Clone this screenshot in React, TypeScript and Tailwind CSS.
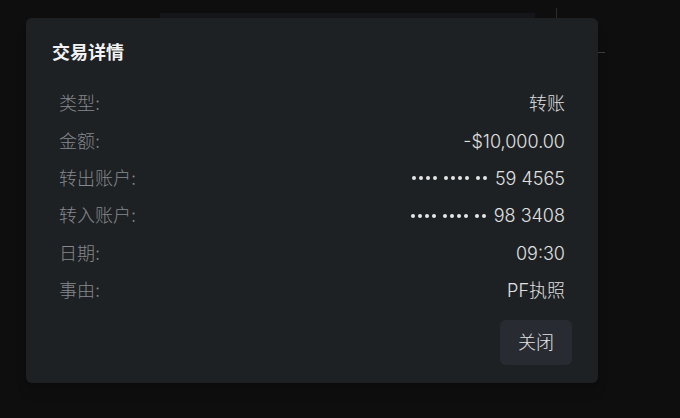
import React from 'react';

const rows: { label: string; value: string; masked?: boolean }[] = [
  { label: '类型:', value: '转账' },
  { label: '金额:', value: '-$10,000.00' },
  { label: '转出账户:', value: '59 4565', masked: true },
  { label: '转入账户:', value: '98 3408', masked: true },
  { label: '日期:', value: '09:30' },
  { label: '事由:', value: 'PF执照' },
];

function Dots({ n }: { n: number }) {
  return (
    <span className="flex items-center gap-[3px]">
      {Array.from({ length: n }).map((_, i) => (
        <span key={i} className="h-[4px] w-[4px] rounded-full bg-[#e6e6e6]" />
      ))}
    </span>
  );
}

export default function App() {
  return (
    <div
      className="relative h-[418px] w-[680px] overflow-hidden bg-[#0e0e0e] pl-[26px] pt-[18px]"
      style={{ fontFamily: 'Inter, "Noto Sans CJK SC", sans-serif' }}
    >
      {/* faint page content behind the dialog */}
      <div className="absolute left-[160px] top-[13px] h-[6px] w-[375px] bg-[#141619]" />
      <div className="absolute left-[556px] top-[8px] h-[10px] w-px bg-[#2a2c2e]" />
      <div className="absolute left-[598px] top-[52px] h-px w-[7px] bg-[#3a3c3e]" />

      {/* Dialog */}
      <div className="relative flex h-[365px] w-[572px] flex-col rounded-md bg-[#1e2124] px-[26px] pt-[23px] shadow-lg">
        <h2 className="text-[18px] font-bold leading-[24px] text-[#f2f2f2]">交易详情</h2>

        <div className="mt-[20px] flex flex-col px-[7px]">
          {rows.map((row) => (
            <div key={row.label} className="flex h-[37.4px] items-center justify-between text-[18px] font-light">
              <span className="text-[#85888c]">{row.label}</span>
              <span className="flex items-center text-[#e0e0e0]">
                {row.masked && (
                  <span className="mr-[8px] flex items-center gap-[7px]">
                    <Dots n={4} />
                    <Dots n={4} />
                    <Dots n={2} />
                  </span>
                )}
                {row.value}
              </span>
            </div>
          ))}
        </div>

        <div className="mt-[11px] flex justify-end">
          <button className="h-[45px] w-[72px] rounded-md bg-[#282b31] text-[18px] font-light text-[#e4e4e4]">
            关闭
          </button>
        </div>
      </div>
    </div>
  );
}
